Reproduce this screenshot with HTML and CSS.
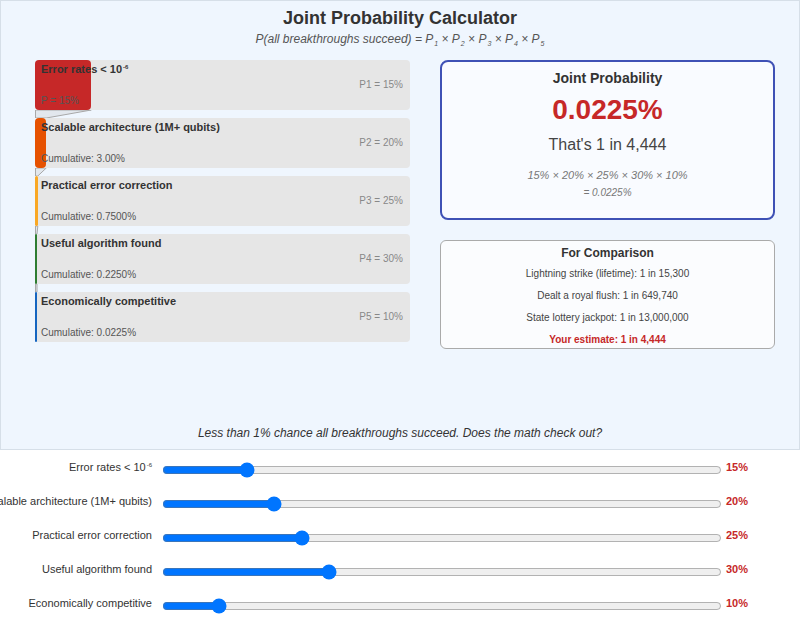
FILE: index.html
```html
<!DOCTYPE html>
<html lang="en">
<head>
<meta charset="utf-8">
<title>Joint Probability Calculator</title>
<link rel="stylesheet" href="styles.css">
</head>
<body>
<div class="panel">
  <h1 class="title">Joint Probability Calculator</h1>
  <p class="formula">P(all breakthroughs succeed) = P<sub>1</sub> × P<sub>2</sub> × P<sub>3</sub> × P<sub>4</sub> × P<sub>5</sub></p>
  <div class="main">
    <div class="funnel">
      <div class="stage">
        <div class="fill red" style="width:15%"></div>
        <div class="stage-text">
          <span class="stage-name">Error rates &lt; 10<sup>-6</sup></span>
          <span class="stage-p">P1 = 15%</span>
          <span class="stage-cum">P = 15%</span>
        </div>
      </div>
      <svg class="link" width="375" height="8" viewBox="0 0 375 8"><polygon points="0.5,0 56.25,0 11.25,8 0.5,8"/></svg>
      <div class="stage">
        <div class="fill orange" style="width:3%"></div>
        <div class="stage-text">
          <span class="stage-name">Scalable architecture (1M+ qubits)</span>
          <span class="stage-p">P2 = 20%</span>
          <span class="stage-cum">Cumulative: 3.00%</span>
        </div>
      </div>
      <svg class="link" width="375" height="8" viewBox="0 0 375 8"><polygon points="0.5,0 11.25,0 2.8,8 0.5,8"/></svg>
      <div class="stage">
        <div class="fill yellow" style="width:0.75%"></div>
        <div class="stage-text">
          <span class="stage-name">Practical error correction</span>
          <span class="stage-p">P3 = 25%</span>
          <span class="stage-cum">Cumulative: 0.7500%</span>
        </div>
      </div>
      <svg class="link" width="375" height="8" viewBox="0 0 375 8"><polygon points="0.5,0 2.8,0 2,8 0.5,8"/></svg>
      <div class="stage">
        <div class="fill green" style="width:2px"></div>
        <div class="stage-text">
          <span class="stage-name">Useful algorithm found</span>
          <span class="stage-p">P4 = 30%</span>
          <span class="stage-cum">Cumulative: 0.2250%</span>
        </div>
      </div>
      <svg class="link" width="375" height="8" viewBox="0 0 375 8"><polygon points="0.5,0 2,0 2,8 0.5,8"/></svg>
      <div class="stage">
        <div class="fill blue" style="width:2px"></div>
        <div class="stage-text">
          <span class="stage-name">Economically competitive</span>
          <span class="stage-p">P5 = 10%</span>
          <span class="stage-cum">Cumulative: 0.0225%</span>
        </div>
      </div>
    </div>
    <div class="cards">
      <div class="card joint">
        <div class="joint-title">Joint Probability</div>
        <div class="joint-value">0.0225%</div>
        <div class="joint-odds">That's 1 in 4,444</div>
        <div class="joint-calc">15% × 20% × 25% × 30% × 10%</div>
        <div class="joint-eq">= 0.0225%</div>
      </div>
      <div class="card compare">
        <div class="compare-title">For Comparison</div>
        <div class="compare-line">Lightning strike (lifetime): 1 in 15,300</div>
        <div class="compare-line">Dealt a royal flush: 1 in 649,740</div>
        <div class="compare-line">State lottery jackpot: 1 in 13,000,000</div>
        <div class="compare-line estimate">Your estimate: 1 in 4,444</div>
      </div>
    </div>
  </div>
  <p class="note">Less than 1% chance all breakthroughs succeed. Does the math check out?</p>
</div>
<div class="sliders">
  <div class="slider-row">
    <label class="slider-label"><span>Error rates &lt; 10<sup>-6</sup></span></label>
    <input class="slider" type="range" min="1" max="100" value="15">
    <span class="slider-value">15%</span>
  </div>
  <div class="slider-row">
    <label class="slider-label"><span>Scalable architecture (1M+ qubits)</span></label>
    <input class="slider" type="range" min="1" max="100" value="20">
    <span class="slider-value">20%</span>
  </div>
  <div class="slider-row">
    <label class="slider-label"><span>Practical error correction</span></label>
    <input class="slider" type="range" min="1" max="100" value="25">
    <span class="slider-value">25%</span>
  </div>
  <div class="slider-row">
    <label class="slider-label"><span>Useful algorithm found</span></label>
    <input class="slider" type="range" min="1" max="100" value="30">
    <span class="slider-value">30%</span>
  </div>
  <div class="slider-row">
    <label class="slider-label"><span>Economically competitive</span></label>
    <input class="slider" type="range" min="1" max="100" value="10">
    <span class="slider-value">10%</span>
  </div>
</div>
</body>
</html>
```

FILE: styles.css
```css
html, body {
  margin: 0;
  padding: 0;
  background: #ffffff;
  font-family: "Liberation Sans", Arial, sans-serif;
  color: #333;
  overflow: hidden;
}

.panel {
  box-sizing: border-box;
  height: 450px;
  background: #eff6fe;
  border: 1px solid #d6dfe8;
  display: flex;
  flex-direction: column;
  padding-top: 6px;
}

.title {
  margin: 0;
  font-size: 18px;
  line-height: 22px;
  font-weight: bold;
  text-align: center;
  color: #333;
}

.formula {
  margin: 2px 0 0;
  height: 16px;
  font-size: 12px;
  line-height: 16px;
  font-style: italic;
  text-align: center;
  color: #555;
}

.formula sub {
  font-size: 7px;
  line-height: 0;
  vertical-align: -3px;
  margin-left: 1px;
}

.main {
  display: flex;
  gap: 30px;
  padding: 0 24px 0 34px;
  margin-top: 13px;
}

.funnel {
  width: 375px;
  display: flex;
  flex-direction: column;
}

.stage {
  display: grid;
  height: 50px;
  background: #e6e6e6;
  border-radius: 4px;
}

.fill {
  grid-area: 1 / 1;
  height: 100%;
  border-radius: 4px;
}

.red { background: #c62828; }
.orange { background: #e65100; }
.yellow { background: #f9a825; }
.green { background: #2e7d32; }
.blue { background: #1565c0; }

.stage-text {
  grid-area: 1 / 1;
  display: grid;
  grid-template-columns: 1fr auto;
  grid-template-rows: auto 1fr auto;
  padding: 3px 7px 3px 6px;
}

.stage-name {
  grid-column: 1;
  grid-row: 1;
  font-size: 11px;
  line-height: 13px;
  font-weight: bold;
  color: #333;
}

.stage-name sup,
.slider-label sup {
  font-size: 6px;
  line-height: 0;
  vertical-align: 4px;
  margin-left: 1px;
}

.stage-p {
  grid-column: 2;
  grid-row: 1 / 4;
  align-self: center;
  font-size: 10px;
  line-height: 12px;
  color: #888;
}

.stage-cum {
  grid-column: 1;
  grid-row: 3;
  font-size: 10px;
  line-height: 12px;
  color: #555;
}

.link {
  display: block;
}

.link polygon {
  fill: #bbbbbb;
  fill-opacity: 0.25;
  stroke: #a8a8a8;
  stroke-width: 1;
}

.cards {
  flex: 1;
  display: flex;
  flex-direction: column;
  gap: 20px;
}

.card {
  box-sizing: border-box;
  text-align: center;
}

.joint {
  height: 160px;
  border: 2px solid #3f51b5;
  border-radius: 8px;
  background: #f9fbff;
  padding-top: 8px;
}

.joint-title {
  font-size: 14px;
  line-height: 16px;
  font-weight: bold;
  color: #333;
}

.joint-value {
  margin-top: 7px;
  font-size: 28px;
  line-height: 34px;
  font-weight: bold;
  color: #c62828;
}

.joint-odds {
  margin-top: 8px;
  font-size: 16px;
  line-height: 20px;
  color: #444;
}

.joint-calc {
  margin-top: 13px;
  font-size: 11px;
  line-height: 14px;
  font-style: italic;
  color: #777;
}

.joint-eq {
  margin-top: 4px;
  font-size: 10px;
  line-height: 13px;
  font-style: italic;
  color: #777;
}

.compare {
  border: 1px solid #aaaaaa;
  border-radius: 6px;
  background: #fbfcfe;
  padding: 5px 0 2px;
}

.compare-title {
  font-size: 12px;
  line-height: 14px;
  font-weight: bold;
  color: #333;
  margin-bottom: 8px;
}

.compare-line {
  font-size: 10px;
  line-height: 12px;
  color: #444;
  margin-bottom: 10px;
}

.compare-line.estimate {
  margin-top: 1px;
  margin-bottom: 0;
  font-weight: bold;
  color: #c62828;
}

.note {
  margin: auto 0 0;
  padding-bottom: 8px;
  font-size: 12px;
  line-height: 16px;
  font-style: italic;
  text-align: center;
  color: #333;
}

.sliders {
  display: flex;
  flex-direction: column;
}

.slider-row {
  display: flex;
  align-items: center;
  height: 34px;
}

.slider-label {
  width: 152px;
  flex: none;
  display: flex;
  justify-content: flex-end;
  white-space: nowrap;
  font-size: 11px;
  color: #333;
}

.slider {
  flex: none;
  width: 560px;
  margin: 6px 4px 0 10px;
}

.slider-value {
  font-size: 11px;
  font-weight: bold;
  color: #c62828;
}
```
